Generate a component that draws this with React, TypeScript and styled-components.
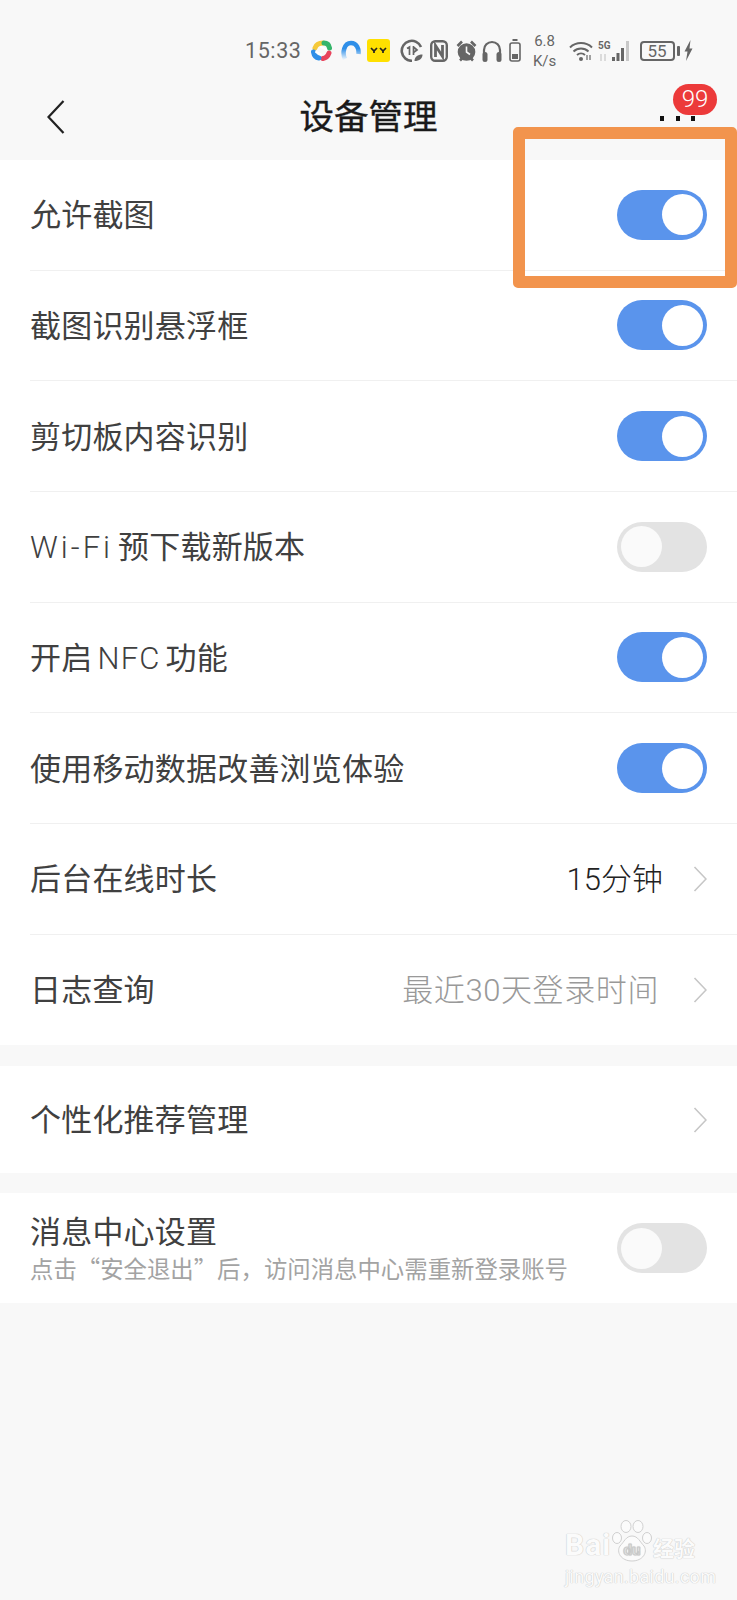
import React from 'react';
import styled, { createGlobalStyle } from 'styled-components';

const GlobalStyle = createGlobalStyle`
  html, body {
    margin: 0;
    padding: 0;
    background: #f8f8f8;
  }
  body {
    font-family: Roboto, 'Noto Sans CJK SC', sans-serif;
  }
`;

const Page = styled.div`
  position: relative;
  width: 737px;
  height: 1600px;
  overflow: hidden;
  background: #f8f8f8;
`;

const StatusBar = styled.div`
  display: flex;
  align-items: center;
  height: 70px;
  padding: 31px 0 0 245px;
  box-sizing: border-box;
  color: #666;
`;

const Time = styled.span`
  font-size: 21.5px;
  letter-spacing: 0.6px;
  line-height: 1;
`;

const Glyph = styled.svg<{ $gap: number }>`
  flex: none;
  margin-left: ${(p) => p.$gap}px;
`;

const Speed = styled.div`
  flex: none;
  width: 26px;
  margin-left: 11px;
  font-size: 15px;
  line-height: 20px;
  text-align: center;
  color: #666;
`;

const BatteryBox = styled.div`
  flex: none;
  box-sizing: border-box;
  width: 35px;
  height: 20px;
  margin-left: 9px;
  border: 2px solid #666;
  border-radius: 4px;
  font-size: 17px;
  line-height: 16px;
  text-align: center;
  color: #666;
`;

const BatteryNub = styled.div`
  flex: none;
  width: 3px;
  height: 10px;
  margin-left: 2px;
  border-radius: 1px;
  background: #666;
`;

const Header = styled.div`
  display: flex;
  align-items: center;
  justify-content: space-between;
  height: 90px;
  padding: 4px 41px 0 47px;
  box-sizing: border-box;
`;

const Title = styled.h1`
  flex: 1;
  margin: 0;
  padding-left: 12px;
  font-size: 34.5px;
  font-weight: 400;
  line-height: 1;
  text-align: center;
  color: #1a1a1a;
  -webkit-text-stroke: 0.4px #1a1a1a;
`;

const MoreButton = styled.div`
  position: relative;
  display: flex;
  gap: 11.5px;
  width: 36px;
  margin-top: 2px;
`;

const Dot = styled.span`
  width: 4px;
  height: 5px;
  background: #111;
`;

const Badge = styled.span`
  position: absolute;
  left: 13px;
  top: -32px;
  width: 44px;
  height: 31px;
  border-radius: 16px;
  background: #ec3a3a;
  color: #fff;
  font-size: 24px;
  font-weight: 300;
  line-height: 31px;
  text-align: center;
`;

const Group = styled.section<{ $gapTop?: number }>`
  margin-top: ${(p) => p.$gapTop ?? 0}px;
  padding-left: 30px;
  background: #fff;
`;

const Row = styled.div<{ $height?: number; $divider?: boolean }>`
  display: flex;
  align-items: center;
  box-sizing: border-box;
  height: ${(p) => p.$height ?? 110.67}px;
  padding-right: 30px;
  border-bottom: ${(p) => (p.$divider ? '1px solid #f0f0f0' : 'none')};
`;

const Label = styled.div`
  flex: 1;
  padding-top: 2px;
  font-size: 31px;
  line-height: 1;
  color: #404040;
  letter-spacing: 0.2px;
`;

const Latin = styled.span<{ $spacing: number }>`
  padding: 0 5px 0 ${(p) => (p.$spacing > 2 ? 0 : 5)}px;
  font-weight: 300;
  letter-spacing: ${(p) => p.$spacing}px;
`;

const Hint = styled.div`
  margin-top: 6px;
  font-family: 'Noto Sans CJK SC', sans-serif;
  font-size: 23.4px;
  line-height: 1.2;
  letter-spacing: 0;
  color: #a3a3a3;
`;

const Value = styled.span<{ $muted?: boolean }>`
  margin-right: ${(p) => (p.$muted ? 34 : 30)}px;
  padding-top: 2px;
  font-size: 31px;
  font-weight: 300;
  line-height: 1;
  letter-spacing: ${(p) => (p.$muted ? 0.6 : 0)}px;
  color: ${(p) => (p.$muted ? '#999' : '#222')};
`;

const Track = styled.div<{ $on: boolean }>`
  display: flex;
  justify-content: ${(p) => (p.$on ? 'flex-end' : 'flex-start')};
  align-items: center;
  box-sizing: border-box;
  width: 90px;
  height: 50px;
  padding: 0 4px;
  border-radius: 25px;
  background: ${(p) => (p.$on ? '#5a94ec' : '#e3e3e3')};
`;

const Knob = styled.div<{ $on: boolean }>`
  width: 41px;
  height: 41px;
  border-radius: 50%;
  background: ${(p) => (p.$on ? '#fff' : '#fafafa')};
`;

const Highlight = styled.div`
  position: absolute;
  left: 513px;
  top: 127px;
  box-sizing: border-box;
  width: 224px;
  height: 161px;
  border: 12px solid #f2944d;
  border-radius: 5px;
`;

const Watermark = styled.div`
  position: absolute;
  left: 565px;
  top: 1520px;
  width: 135px;
  color: #fbfbfb;
  text-shadow: 0 0 1px #c8c8c8, 0 0 1px #c8c8c8;
`;

const WatermarkTop = styled.div`
  display: flex;
  align-items: flex-end;
  height: 42px;
  font-size: 30px;
  font-weight: 700;
  line-height: 34px;
`;

const WatermarkBai = styled.span`
  width: 46px;
  letter-spacing: 1px;
`;

const WatermarkCn = styled.span`
  font-family: 'Noto Sans CJK SC', sans-serif;
  font-size: 21px;
  font-weight: 700;
  line-height: 30px;
`;

const WatermarkUrl = styled.div`
  margin-top: 5px;
  font-size: 18px;
  line-height: 20px;
  letter-spacing: 0.3px;
`;

const Switch = ({ on }: { on: boolean }) => (
  <Track $on={on}>
    <Knob $on={on} />
  </Track>
);

const Chevron = () => (
  <svg width="14" height="26" viewBox="0 0 14 26" fill="none">
    <path d="M1.500 1l11.500 12L1.500 25" stroke="#c6c6c6" strokeWidth="1.600" />
  </svg>
);

const StatusIcons = () => (
  <>
    <Glyph $gap={9} width="21" height="21" viewBox="0 0 21 21" fill="none" strokeWidth="5" strokeLinecap="round">
      <path d="M4 8c1-3 4-5 8-5" stroke="#f5c93a" />
      <path d="M13 3c3 0 5 2 5.500 5" stroke="#35b56a" />
      <path d="M18 13c-1 3-3 5-6 5.500" stroke="#e8435c" />
      <path d="M8 18c-3-.500-5-3-5.500-6" stroke="#2f8fe8" />
      <path d="M5 12l5 2.500M10 7l5 2.500" stroke="#fff" strokeWidth="2" />
    </Glyph>
    <Glyph $gap={9} width="20" height="21" viewBox="0 0 20 21" fill="none">
      <defs>
        <linearGradient id="arcFade" x1="0" y1="0" x2="0" y2="1">
          <stop offset="0.35" stopColor="#2f8fe8" />
          <stop offset="1" stopColor="#e4f1fc" />
        </linearGradient>
      </defs>
      <path d="M4 19C1 13 3 3 10 3c6 0 8 6 7.500 11" stroke="url(#arcFade)" strokeWidth="4.500" />
    </Glyph>
    <Glyph $gap={6} width="23" height="23" viewBox="0 0 23 23">
      <rect width="23" height="23" rx="3" fill="#ffe000" />
      <path d="M4 9l3 3 3-3M13 9l3 3 3-3M7 12v2M16 12v2" stroke="#222" strokeWidth="1.700" fill="none" />
    </Glyph>
    <Glyph $gap={10} width="23" height="23" viewBox="0 0 23 23" fill="none">
      <path d="M21 8A10 10 0 1 0 12 21.800" stroke="#666" strokeWidth="2.600" />
      <path d="M7 9.500L9.500 8v8M13.500 7v9M13.500 8l3.500 3-3.500 2.500" stroke="#666" strokeWidth="1.700" />
      <path d="M14.500 22c0-4 3-6.500 8-6.500 0 4-3 6.500-8 6.500z" fill="#666" />
    </Glyph>
    <Glyph $gap={7} width="18" height="22" viewBox="0 0 18 22" fill="none">
      <rect x="1.200" y="1.200" width="15.600" height="19.600" rx="4" stroke="#666" strokeWidth="2.400" />
      <path d="M5.500 17V5.500l7 11V5" stroke="#666" strokeWidth="2.800" />
    </Glyph>
    <Glyph $gap={8} width="21" height="22" viewBox="0 0 21 22" fill="none">
      <circle cx="10.500" cy="12" r="8.800" fill="#666" />
      <path d="M10.500 6.500v5.500l3.500 2.500" stroke="#f8f8f8" strokeWidth="1.600" />
      <path d="M1.500 6l4.500-4.500M19.500 6L15 1.500M4 20.500l2.500-2.500M17 20.500L14.500 18" stroke="#666" strokeWidth="2.600" />
    </Glyph>
    <Glyph $gap={5} width="20" height="22" viewBox="0 0 20 22" fill="none">
      <path d="M2 14V10a8 8 0 0 1 16 0v4" stroke="#666" strokeWidth="2.200" />
      <rect x="0.500" y="12" width="5" height="10" rx="2.500" fill="#666" />
      <rect x="14.500" y="12" width="5" height="10" rx="2.500" fill="#666" />
    </Glyph>
    <Glyph $gap={7} width="12" height="23" viewBox="0 0 12 23" fill="none">
      <path d="M3.500 1h5" stroke="#666" strokeWidth="2" />
      <rect x="1" y="4" width="10" height="18" rx="2" stroke="#666" strokeWidth="1.600" />
      <rect x="3" y="15" width="6" height="5" fill="#666" />
    </Glyph>
    <Speed>
      6.8
      <br />
      K/s
    </Speed>
    <Glyph $gap={11} width="25" height="20" viewBox="0 0 25 20" fill="none">
      <path d="M1 6.500a16 16 0 0 1 22 0M4.500 10.500a11 11 0 0 1 15 0M8 14a6 6 0 0 1 8 0" stroke="#666" strokeWidth="2" />
      <circle cx="12" cy="18" r="2" fill="#666" />
      <path d="M18 14v5M21 14v5" stroke="#666" strokeWidth="1.200" />
    </Glyph>
    <Glyph $gap={4} width="33" height="22" viewBox="0 0 33 22">
      <text x="0" y="9" fontSize="10" fontWeight="700" fontFamily="Roboto, sans-serif" fill="#666">5G</text>
      <path d="M3 14v7M7 14v7" stroke="#c8c8c8" strokeWidth="1.200" />
      <rect x="14" y="17" width="3" height="4" fill="#666" />
      <rect x="18.500" y="13" width="3" height="8" fill="#666" />
      <rect x="23" y="8" width="3" height="13" fill="#666" />
      <rect x="28" y="1" width="3" height="20" fill="#c8c8c8" />
    </Glyph>
    <BatteryBox>55</BatteryBox>
    <BatteryNub />
    <Glyph $gap={4} width="9" height="21" viewBox="0 0 9 21">
      <path d="M6.500 0L0.500 11.500h3L2 21l6.500-12.500h-3z" fill="#666" />
    </Glyph>
  </>
);

const PawMark = () => (
  <svg width="42" height="42" viewBox="0 0 42 42" fill="#fbfbfb" stroke="#d0d0d0" strokeWidth="1">
    <ellipse cx="6" cy="18" rx="4.500" ry="5.500" />
    <ellipse cx="15" cy="6.500" rx="5" ry="6" />
    <ellipse cx="27" cy="6.500" rx="5" ry="6" />
    <ellipse cx="36" cy="18" rx="4.500" ry="5.500" />
    <path d="M21 16c6 0 8 6 12 10 4 6-1 15-12 15S5 32 9 26c4-4 6-10 12-10z" />
    <text x="21" y="35" fontSize="15" fontWeight="700" textAnchor="middle" fontFamily="Roboto, sans-serif" fill="#f4f4f4" stroke="#c8c8c8" strokeWidth="0.600">du</text>
  </svg>
);

const toggles: { id: string; label: React.ReactNode; on: boolean }[] = [
  { id: 'shot', label: '允许截图', on: true },
  { id: 'float', label: '截图识别悬浮框', on: true },
  { id: 'clip', label: '剪切板内容识别', on: true },
  {
    id: 'wifi',
    label: (
      <>
        <Latin $spacing={3}>Wi-Fi</Latin>预下载新版本
      </>
    ),
    on: false,
  },
  {
    id: 'nfc',
    label: (
      <>
        开启<Latin $spacing={1.200}>NFC</Latin>功能
      </>
    ),
    on: true,
  },
  { id: 'data', label: '使用移动数据改善浏览体验', on: true },
];

export default function App() {
  return (
    <Page>
      <GlobalStyle />
      <StatusBar>
        <Time>15:33</Time>
        <StatusIcons />
      </StatusBar>
      <Header>
        <svg width="18" height="34" viewBox="0 0 18 34" fill="none">
          <path d="M16.500 1L1.500 17l15 16" stroke="#222" strokeWidth="2.200" />
        </svg>
        <Title>设备管理</Title>
        <MoreButton>
          <Dot />
          <Dot />
          <Dot />
          <Badge>99</Badge>
        </MoreButton>
      </Header>

      <Group>
        {toggles.map((t) => (
          <Row key={t.id} $divider>
            <Label>{t.label}</Label>
            <Switch on={t.on} />
          </Row>
        ))}
        <Row $divider>
          <Label>后台在线时长</Label>
          <Value>15分钟</Value>
          <Chevron />
        </Row>
        <Row>
          <Label>日志查询</Label>
          <Value $muted>最近30天登录时间</Value>
          <Chevron />
        </Row>
      </Group>

      <Group $gapTop={21}>
        <Row $height={107}>
          <Label>个性化推荐管理</Label>
          <Chevron />
        </Row>
      </Group>

      <Group $gapTop={20}>
        <Row $height={110}>
          <Label>
            消息中心设置
            <Hint>点击“安全退出”后，访问消息中心需重新登录账号</Hint>
          </Label>
          <Switch on={false} />
        </Row>
      </Group>

      <Highlight />

      <Watermark>
        <WatermarkTop>
          <WatermarkBai>Bai</WatermarkBai>
          <PawMark />
          <WatermarkCn>经验</WatermarkCn>
        </WatermarkTop>
        <WatermarkUrl>jingyan.baidu.com</WatermarkUrl>
      </Watermark>
    </Page>
  );
}
